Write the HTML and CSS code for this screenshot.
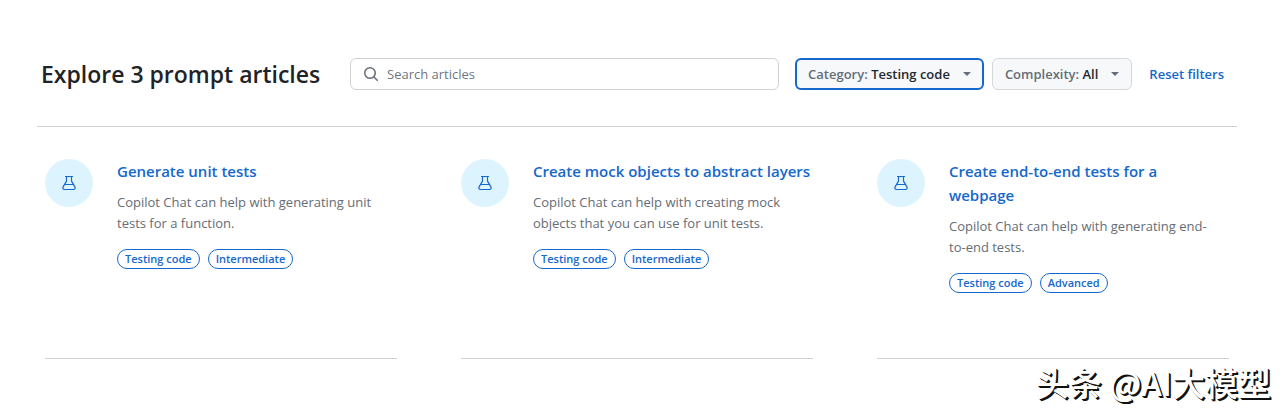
FILE: index.html
```html
<!DOCTYPE html>
<html lang="en">
<head>
<meta charset="utf-8">
<meta name="viewport" content="width=device-width, initial-scale=1">
<title>Prompt articles</title>
<link rel="stylesheet" href="styles.css">
</head>
<body>
<svg class="sprite" aria-hidden="true">
  <symbol id="beaker" viewBox="0 0 16 16">
    <path d="M4.500 1.500h7M5.500 1.500v4.600L2.100 11.900c-.7 1.200.1 2.600 1.400 2.600h9c1.300 0 2.100-1.400 1.400-2.600L10.500 6.100V1.500M3.700 9.500h8.600"/>
  </symbol>
</svg>
<main class="page">
  <header class="toolbar">
    <h1 class="title">Explore 3 prompt articles</h1>
    <label class="search">
      <svg class="search-icon" viewBox="0 0 16 16" aria-hidden="true"><path d="M10.68 11.74a6 6 0 0 1-7.922-8.982 6 6 0 0 1 8.982 7.922l3.04 3.04a.749.749 0 1 1-1.06 1.06ZM11.5 7a4.499 4.499 0 1 0-8.997 0A4.499 4.499 0 0 0 11.5 7Z"/></svg>
      <input class="search-input" type="search" placeholder="Search articles" aria-label="Search articles">
    </label>
    <div class="filters">
      <button class="filter filter-active" type="button" aria-haspopup="true"><span><span class="filter-name">Category:</span> Testing code</span><span class="caret"></span></button>
      <button class="filter" type="button" aria-haspopup="true"><span><span class="filter-name">Complexity:</span> All</span><span class="caret"></span></button>
      <button class="reset" type="button">Reset filters</button>
    </div>
  </header>
  <ul class="cards">
    <li class="card">
      <span class="badge"><svg class="badge-icon" aria-hidden="true"><use href="#beaker"/></svg></span>
      <div class="card-body">
        <h2 class="card-title"><a href="#unit-tests">Generate unit tests</a></h2>
        <p class="card-text">Copilot Chat can help with generating unit<br>tests for a function.</p>
        <div class="tags"><span class="tag">Testing code</span><span class="tag">Intermediate</span></div>
      </div>
    </li>
    <li class="card">
      <span class="badge"><svg class="badge-icon" aria-hidden="true"><use href="#beaker"/></svg></span>
      <div class="card-body">
        <h2 class="card-title"><a href="#mock-objects">Create mock objects to abstract layers</a></h2>
        <p class="card-text">Copilot Chat can help with creating mock<br>objects that you can use for unit tests.</p>
        <div class="tags"><span class="tag">Testing code</span><span class="tag">Intermediate</span></div>
      </div>
    </li>
    <li class="card">
      <span class="badge"><svg class="badge-icon" aria-hidden="true"><use href="#beaker"/></svg></span>
      <div class="card-body">
        <h2 class="card-title"><a href="#end-to-end">Create end-to-end tests for a<br>webpage</a></h2>
        <p class="card-text">Copilot Chat can help with generating end-<wbr>to-end tests.</p>
        <div class="tags"><span class="tag">Testing code</span><span class="tag">Advanced</span></div>
      </div>
    </li>
  </ul>
</main>
<div class="watermark" lang="zh">头条 @AI大模型</div>
</body>
</html>
```
FILE: styles.css
```css
* { box-sizing: border-box; }

body {
  margin: 0;
  background: #fff;
  color: #1f2328;
  font: 13px/21px "Open Sans", "Noto Sans", sans-serif;
}

.sprite { display: none; }

.page { padding: 58px 48px 0 37px; }

.toolbar {
  display: flex;
  align-items: center;
  gap: 16px;
  padding: 0 4px 36px;
  border-bottom: 1px solid #d0d3d6;
}

.title {
  flex: 0 0 293px;
  margin: 0;
  font-size: 23px;
  line-height: 30px;
  font-weight: 600;
  white-space: nowrap;
}

.search {
  flex: 1;
  display: flex;
  align-items: center;
  gap: 8px;
  height: 32px;
  padding: 0 12px;
  border: 1px solid #d0d3d6;
  border-radius: 6px;
}

.search-icon { width: 16px; height: 16px; fill: #656d76; }

.search-input {
  flex: 1;
  min-width: 0;
  padding: 0;
  border: 0;
  outline: 0;
  background: none;
  color: inherit;
  font: inherit;
}

.search-input::placeholder { color: #6e7781; opacity: 1; }

.filters { display: flex; gap: 8px; }

.filter,
.reset {
  height: 32px;
  font: 600 13px/20px "Open Sans", "Noto Sans", sans-serif;
  white-space: nowrap;
  cursor: pointer;
}

.filter {
  display: flex;
  align-items: center;
  justify-content: space-between;
  gap: 13px;
  padding: 0 12px;
  border: 1px solid #d5d8db;
  border-radius: 6px;
  background: #f6f8fa;
  color: #24292f;
}

.filter-active {
  padding: 0 11px;
  border: 2px solid #1568cc;
}

.filter-name { color: #656d76; }

.caret {
  border: 4px solid transparent;
  border-top-color: #656d76;
  border-bottom: 0;
}

.reset {
  padding: 0 9px;
  border: 0;
  background: none;
  color: #1568cc;
}

.cards {
  display: grid;
  grid-template-columns: repeat(3, 1fr);
  gap: 64px;
  margin: 0;
  padding: 32px 8px 0;
  list-style: none;
}

.card {
  display: flex;
  gap: 24px;
  padding-bottom: 65px;
  border-bottom: 1px solid #d0d3d6;
}

.badge {
  flex: none;
  display: flex;
  align-items: center;
  justify-content: center;
  width: 48px;
  height: 48px;
  border-radius: 50%;
  background: #ddf4ff;
}

.badge-icon {
  width: 16px;
  height: 16px;
  fill: none;
  stroke: #1568cc;
  stroke-width: 1.2;
  stroke-linecap: round;
  stroke-linejoin: round;
}

.card-title {
  margin: 0 0 9px;
  font-size: 15px;
  line-height: 24px;
  font-weight: 600;
}

.card-title a { color: #1568cc; text-decoration: none; }

.card-text {
  max-width: 272px;
  margin: 0 0 15px;
  color: #656d76;
}

.tags { display: flex; gap: 8px; }

.tag {
  padding: 0 7px;
  border: 1px solid #1568cc;
  border-radius: 10px;
  color: #1568cc;
  font-size: 11px;
  line-height: 18px;
  font-weight: 600;
  white-space: nowrap;
}

.watermark {
  position: absolute;
  right: 14px;
  bottom: 9px;
  color: #fff;
  font: 500 33px/44px "Noto Sans CJK SC", sans-serif;
  text-shadow: 1px 1px 0 #111, 2px 2px 0 #111;
}
```
